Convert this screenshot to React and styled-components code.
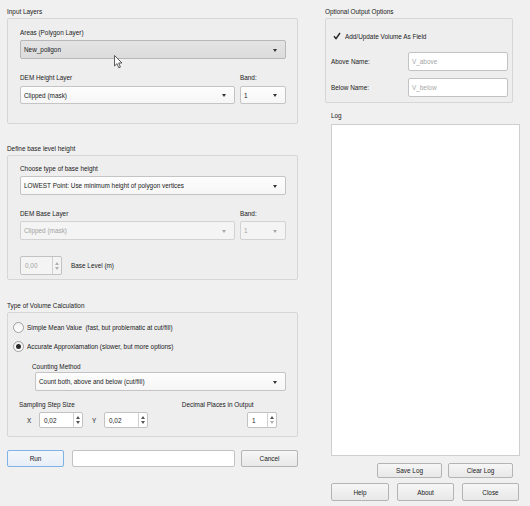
import React from 'react';
import styled, { createGlobalStyle, css } from 'styled-components';

const GlobalStyle = createGlobalStyle`
  * { box-sizing: border-box; }
  html, body { margin: 0; padding: 0; background: #f0f0f0; }
  body {
    font-family: 'Liberation Sans', Arial, sans-serif;
    font-size: 6.4px;
    color: #1a1a1a;
  }
`;

const Window = styled.div`
  position: relative;
  width: 530px;
  height: 506px;
  display: flex;
  gap: 27px;
  padding-left: 7px;
  background: #f0f0f0;
`;

const LeftColumn = styled.div`
  width: 291px;
  display: flex;
  flex-direction: column;
`;

const RightColumn = styled.div`
  width: 195px;
  display: flex;
  flex-direction: column;
`;

const Title = styled.div`
  height: 18px;
  padding-top: 4px;
  display: flex;
  align-items: center;
  margin-top: ${({ $mt }) => $mt || 0}px;
`;

const GroupBox = styled.div`
  border: 1px solid #d6d6d6;
  border-radius: 2px;
  background: #eeeeee;
  height: ${({ $h }) => $h}px;
  width: ${({ $w }) => ($w ? `${$w}px` : 'auto')};
  padding: ${({ $pt }) => $pt}px ${({ $pr }) => $pr ?? 11}px 0 ${({ $pl }) => $pl ?? 12}px;
  display: flex;
  flex-direction: column;
`;

const Label = styled.div`
  height: 10px;
  display: flex;
  align-items: center;
  margin-top: ${({ $mt }) => $mt || 0}px;
  margin-left: ${({ $ml }) => $ml || 0}px;
  color: ${({ $disabled }) => ($disabled ? '#999' : '#1a1a1a')};
`;

const Row = styled.div`
  display: flex;
  align-items: ${({ $align }) => $align || 'flex-start'};
  gap: ${({ $gap }) => $gap || 0}px;
  margin-top: ${({ $mt }) => $mt || 0}px;
  margin-left: ${({ $ml }) => $ml || 0}px;
`;

const Col = styled.div`
  display: flex;
  flex-direction: column;
  width: ${({ $w }) => ($w ? `${$w}px` : 'auto')};
  flex: ${({ $w }) => ($w ? 'none' : '1')};
`;

const ComboBox = styled.div`
  position: relative;
  height: ${({ $h }) => $h || 19}px;
  margin-top: ${({ $mt }) => $mt ?? 3}px;
  margin-left: ${({ $ml }) => $ml || 0}px;
  border: 1px solid #c4c4c4;
  border-radius: 2px;
  background: linear-gradient(#fdfdfd, #f6f6f6);
  display: flex;
  align-items: center;
  padding-left: 3px;
  color: #1a1a1a;
  ${({ $hover }) =>
    $hover &&
    css`
      background: linear-gradient(#e4e4e4, #dcdcdc);
      border-color: #b8b8b8;
    `}
  ${({ $disabled }) =>
    $disabled &&
    css`
      color: #a2a2a2;
      background: #f4f4f4;
      border-color: #d2d2d2;
    `}
  &::after {
    content: '';
    position: absolute;
    right: 8px;
    top: 50%;
    margin-top: -1px;
    border-left: 2.5px solid transparent;
    border-right: 2.5px solid transparent;
    border-top: 3px solid ${({ $disabled }) => ($disabled ? '#a8a8a8' : '#333')};
  }
`;

const SpinBox = styled.div`
  width: ${({ $w }) => $w}px;
  height: ${({ $h }) => $h || 16}px;
  border: 1px solid #c2c2c2;
  border-radius: 2px;
  background: ${({ $disabled }) => ($disabled ? '#f4f4f4' : '#fff')};
  color: ${({ $disabled }) => ($disabled ? '#a2a2a2' : '#1a1a1a')};
  display: flex;
  align-items: stretch;
`;

const SpinValue = styled.div`
  flex: 1;
  display: flex;
  align-items: center;
  padding-left: 4px;
`;

const SpinArrows = styled.div`
  width: 9px;
  border-left: 1px solid #d0d0d0;
  display: flex;
  flex-direction: column;
  align-items: center;
  justify-content: center;
  gap: 2px;
`;

const Arrow = styled.span`
  width: 0;
  height: 0;
  border-left: 2px solid transparent;
  border-right: 2px solid transparent;
  ${({ $up, $c }) =>
    $up
      ? css`border-bottom: 3px solid ${$c};`
      : css`border-top: 3px solid ${$c};`}
`;

function Spin({ value, w, h, disabled, downLight }) {
  const c = disabled ? '#b0b0b0' : '#555';
  return (
    <SpinBox $w={w} $h={h} $disabled={disabled}>
      <SpinValue>{value}</SpinValue>
      <SpinArrows>
        <Arrow $up $c={c} />
        <Arrow $c={downLight ? '#b0b0b0' : c} />
      </SpinArrows>
    </SpinBox>
  );
}

const RadioRow = styled.div`
  height: 12px;
  display: flex;
  align-items: center;
  gap: 3px;
  margin-top: ${({ $mt }) => $mt || 0}px;
  margin-left: -7px;
`;

const RadioCircle = styled.span`
  width: 11px;
  height: 11px;
  border-radius: 50%;
  border: 1px solid #a0a0a0;
  background: linear-gradient(#f2f2f2, #ffffff);
  display: flex;
  align-items: center;
  justify-content: center;
  &::after {
    content: '';
    width: 5px;
    height: 5px;
    border-radius: 50%;
    background: #2a2a2a;
    display: ${({ $checked }) => ($checked ? 'block' : 'none')};
  }
`;

const Button = styled.div`
  width: ${({ $w }) => $w}px;
  height: ${({ $h }) => $h || 17}px;
  border: 1px solid ${({ $focus }) => ($focus ? '#7fb2e5' : '#b4b4b4')};
  border-radius: 2px;
  background: ${({ $focus }) =>
    $focus ? 'linear-gradient(#f3f7fb, #e7eef6)' : 'linear-gradient(#f6f6f6, #e8e8e8)'};
  display: flex;
  align-items: center;
  justify-content: center;
  color: #1a1a1a;
`;

const TextField = styled.div`
  width: ${({ $w }) => ($w ? `${$w}px` : 'auto')};
  flex: ${({ $w }) => ($w ? 'none' : '1')};
  height: ${({ $h }) => $h || 17}px;
  border: 1px solid #c2c2c2;
  border-radius: 2px;
  background: #fff;
  color: #a6a6a6;
  display: flex;
  align-items: center;
  padding-left: 3px;
`;

const CheckRow = styled.div`
  height: 10px;
  display: flex;
  align-items: center;
  gap: 4px;
  margin-left: 1px;
`;

const CheckBox = styled.span`
  width: 9px;
  height: 9px;
  display: flex;
  align-items: center;
  justify-content: center;
`;

const NameRow = styled.div`
  display: flex;
  align-items: center;
  margin-top: ${({ $mt }) => $mt}px;
`;

const NameLabel = styled.div`
  width: 77px;
`;

const LogArea = styled.div`
  margin: 4px 0 0 6px;
  width: 189px;
  height: 332px;
  background: #fff;
  border: 1px solid #cfcfcf;
`;

const ButtonRow = styled.div`
  display: flex;
  gap: ${({ $gap }) => $gap}px;
  margin-top: ${({ $mt }) => $mt}px;
  margin-left: ${({ $ml }) => $ml}px;
`;

const Cursor = styled.svg`
  position: absolute;
  left: 114px;
  top: 55px;
`;

export default function App() {
  return (
    <>
      <GlobalStyle />
      <Window>
        <LeftColumn>
          <Title>Input Layers</Title>
          <GroupBox $h={106} $pt={8}>
            <Label>Areas (Polygon Layer)</Label>
            <ComboBox $hover>New_poligon</ComboBox>
            <Row $mt={13} $gap={5}>
              <Col>
                <Label>DEM Height Layer</Label>
                <ComboBox $mt={4} $h={18}>Clipped (mask)</ComboBox>
              </Col>
              <Col $w={46}>
                <Label>Band:</Label>
                <ComboBox $mt={4} $h={18}>1</ComboBox>
              </Col>
            </Row>
          </GroupBox>

          <Title $mt={13}>Define base level height</Title>
          <GroupBox $h={125} $pt={7}>
            <Label>Choose type of base height</Label>
            <ComboBox>LOWEST Point: Use minimum height of polygon vertices</ComboBox>
            <Row $mt={13} $gap={5}>
              <Col>
                <Label>DEM Base Layer</Label>
                <ComboBox $mt={3} $disabled>Clipped (mask)</ComboBox>
              </Col>
              <Col $w={46}>
                <Label>Band:</Label>
                <ComboBox $mt={3} $disabled>1</ComboBox>
              </Col>
            </Row>
            <Row $mt={16} $align="center" $gap={9}>
              <Spin value="0,00" w={42} h={19} disabled />
              <span>Base Level (m)</span>
            </Row>
          </GroupBox>

          <Title $mt={14}>Type of Volume Calculation</Title>
          <GroupBox $h={125} $pt={8}>
            <RadioRow>
              <RadioCircle />
              <span>Simple Mean Value&nbsp; (fast, but problematic at cut/fill)</span>
            </RadioRow>
            <RadioRow $mt={7}>
              <RadioCircle $checked />
              <span>Accurate Approxiamation (slower, but more options)</span>
            </RadioRow>
            <Label $mt={9} $ml={12}>Counting Method</Label>
            <ComboBox $mt={1} $ml={15}>Count both, above and below (cut/fill)</ComboBox>
            <Row $mt={8}>
              <Label $ml={-1}>Sampling Step Size</Label>
              <Label $ml={107}>Decimal Places in Output</Label>
            </Row>
            <Row $mt={3} $align="center">
              <Label $ml={7} style={{ width: 12 }}>X</Label>
              <Spin value="0,02" w={44} />
              <Label $ml={9} style={{ width: 12 }}>Y</Label>
              <Spin value="0,02" w={44} />
              <Row $ml={99}>
                <Spin value="1" w={30} downLight />
              </Row>
            </Row>
          </GroupBox>

          <Row $mt={13} $gap={8}>
            <Button $w={57} $focus>Run</Button>
            <TextField $w={163} />
            <Button $w={57} style={{ marginLeft: -2 }}>Cancel</Button>
          </Row>
        </LeftColumn>

        <RightColumn>
          <Title>Optional Output Options</Title>
          <GroupBox $h={85} $w={188} $pt={12} $pl={5} $pr={4}>
            <CheckRow>
              <CheckBox>
                <svg width="8" height="8" viewBox="0 0 8 8">
                  <path d="M1 4.2 L3 6.6 L7 1" fill="none" stroke="#222" strokeWidth="1.4" />
                </svg>
              </CheckBox>
              <span>Add/Update Volume As Field</span>
            </CheckRow>
            <NameRow $mt={11}>
              <NameLabel>Above Name:</NameLabel>
              <TextField $w={100} $h={19}>V_above</TextField>
            </NameRow>
            <NameRow $mt={7}>
              <NameLabel>Below Name:</NameLabel>
              <TextField $w={100} $h={19}>V_below</TextField>
            </NameRow>
          </GroupBox>
          <Label $mt={7} $ml={6}>Log</Label>
          <LogArea />
          <ButtonRow $mt={7} $ml={52} $gap={6}>
            <Button $w={65} $h={15}>Save Log</Button>
            <Button $w={65} $h={15}>Clear Log</Button>
          </ButtonRow>
          <ButtonRow $mt={5} $ml={6} $gap={8}>
            <Button $w={58} $h={18}>Help</Button>
            <Button $w={57} $h={18}>About</Button>
            <Button $w={57} $h={18}>Close</Button>
          </ButtonRow>
        </RightColumn>

        <Cursor width="9" height="14" viewBox="0 0 9 14">
          <path d="M0.5 0.5 L0.5 11 L3 8.6 L4.8 12.8 L6.4 12.1 L4.7 8 L8 8 Z" fill="#fff" stroke="#333" strokeWidth="0.8" />
        </Cursor>
      </Window>
    </>
  );
}
